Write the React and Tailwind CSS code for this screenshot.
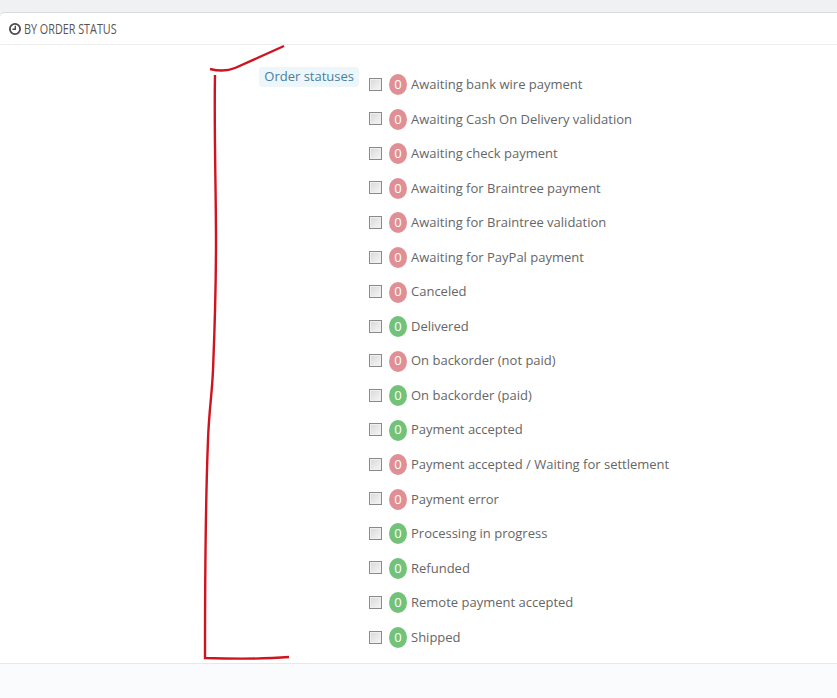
const statuses = [
    { name: "Awaiting bank wire payment", ok: false },
    { name: "Awaiting Cash On Delivery validation", ok: false },
    { name: "Awaiting check payment", ok: false },
    { name: "Awaiting for Braintree payment", ok: false },
    { name: "Awaiting for Braintree validation", ok: false },
    { name: "Awaiting for PayPal payment", ok: false },
    { name: "Canceled", ok: false },
    { name: "Delivered", ok: true },
    { name: "On backorder (not paid)", ok: false },
    { name: "On backorder (paid)", ok: true },
    { name: "Payment accepted", ok: true },
    { name: "Payment accepted / Waiting for settlement", ok: false },
    { name: "Payment error", ok: false },
    { name: "Processing in progress", ok: true },
    { name: "Refunded", ok: true },
    { name: "Remote payment accepted", ok: true },
    { name: "Shipped", ok: true },
];

function ClockIcon() {
    return (
        <svg width="12" height="12" viewBox="0 0 12 12" fill="none" stroke="#4a4a4a" className="shrink-0">
            <circle cx="6" cy="6" r="5.1" strokeWidth="1.8" />
            <path d="M6.3 2.8v3.5H3.4" strokeWidth="1.4" />
        </svg>
    );
}

function StatusRow({ name, ok }) {
    return (
        <div className="flex h-[34.56px] items-center">
            <span className="-mt-[1px] h-[13px] w-[13px] shrink-0 border border-[#8a8a8a] bg-gradient-to-br from-[#d8d8d8] to-[#f6f6f6] shadow-[inset_0_0_0_1px_#f0f0f0]" />
            <span
                className={`ml-[7px] flex h-[21px] w-[18px] shrink-0 items-center justify-center rounded-[50%] text-[13px] text-white ${
                    ok ? "bg-[#72c279]" : "bg-[#e08f95]"
                }`}
            >
                0
            </span>
            <span className="ml-[4px] text-[13px] text-[#666]">{name}</span>
        </div>
    );
}

export default function App() {
    return (
        <div className="relative h-[698px] w-[837px] overflow-hidden bg-[#eff1f2] pt-[12px] font-['Open_Sans',sans-serif]">
            <div className="rounded-tl-[5px] border-t border-[#d9dbde] bg-white">
                <div className="flex h-[32px] items-center gap-[3px] border-b border-[#eeeeee] pl-[9px]">
                    <ClockIcon />
                    <h3 className="origin-left scale-x-[0.72] text-[15px] whitespace-nowrap text-[#555]">
                        BY ORDER STATUS
                    </h3>
                </div>
                <div className="flex h-[618px] pt-[22.5px]">
                    <div className="flex w-[359px] shrink-0 justify-end">
                        <span className="-mt-[0.5px] h-[20px] rounded-[3px] bg-[#edf7fb] px-[5px] text-[13px] leading-[19px] text-[#4a8099]">
                            Order statuses
                        </span>
                    </div>
                    <div className="ml-[10px]">
                        {statuses.map((status) => (
                            <StatusRow key={status.name} name={status.name} ok={status.ok} />
                        ))}
                    </div>
                </div>
            </div>
            <div className="h-[35px] border-t border-[#e6e8ea] bg-[#fafbfc]" />

            {/* red marker drawn over the screenshot */}
            <svg className="absolute top-0 left-0" width="837" height="698" fill="none" stroke="#cf1420" strokeWidth="2.4">
                <path d="M210 69C218 71 228 71 235 68L284 46" />
                <path d="M215 75C214 130 216 190 216 240C216 300 214 345 213 370C212 395 209 410 208 440C206 490 205 560 205 657L205 658C235 659 265 659 289 657" />
            </svg>
        </div>
    );
}
